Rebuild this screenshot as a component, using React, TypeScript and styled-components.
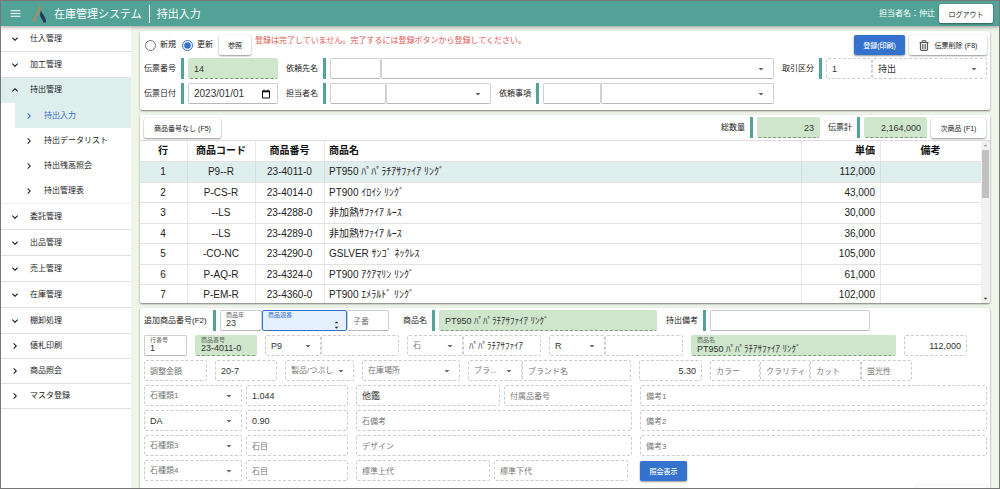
import React from 'react';
import styled, { createGlobalStyle, css } from 'styled-components';
import { MdMenu, MdKeyboardArrowDown, MdKeyboardArrowUp, MdKeyboardArrowRight, MdArrowDropDown, MdArrowDropUp } from 'react-icons/md';

const teal = '#52a297';
const blue = '#3472cd';
const green = '#cfe6cc';

const Global = createGlobalStyle`
  * { box-sizing: border-box; }
  body { margin: 0; font: 8px/12px "Liberation Sans", "Noto Sans CJK JP", sans-serif; color: #222; }
  button, input, select { font-family: inherit; margin: 0; }
`;

const Page = styled.div`
  height: 100vh;
  display: flex;
  flex-direction: column;
  border: 1px solid #777;
  background: #eff6e9;
  overflow: hidden;
`;

const Header = styled.header`
  display: flex;
  align-items: center;
  flex: 0 0 25px;
  padding: 0 6px 0 8px;
  background: ${teal};
  color: #fff;
  box-shadow: 0 1px 4px rgba(0, 0, 0, 0.4);
  z-index: 1;
`;

const MenuButton = styled.button`
  display: flex;
  padding: 0;
  border: 0;
  background: none;
  color: #fff;
  font-size: 13px;
`;

const Logo = styled.svg`
  width: 16px;
  height: 20px;
  margin-left: 10px;
`;

const Title = styled.h1`
  margin: 0;
  padding: 0 7px 0 6px;
  border-right: 1px solid #fff;
  font-size: 11px;
  line-height: 18px;
  font-weight: 400;
`;

const PageName = styled.span`
  flex: 1;
  padding-left: 7px;
  font-size: 11px;
`;

const Button = styled.button<{ $primary?: boolean; $width: number; $height?: number }>`
  display: flex;
  align-items: center;
  justify-content: center;
  gap: 6px;
  flex: none;
  width: ${p => p.$width}px;
  height: ${p => p.$height ?? 20}px;
  padding: 0;
  border: 0;
  border-radius: 2px;
  background: ${p => (p.$primary ? blue : '#fff')};
  color: ${p => (p.$primary ? '#fff' : '#222')};
  box-shadow: 0 1px 2px rgba(0, 0, 0, 0.4), 0 0 1px rgba(0, 0, 0, 0.2);
  font-size: 7px;
  font-weight: ${p => (p.$primary ? 500 : 400)};
  white-space: nowrap;
`;

const UserName = styled.span`
  margin-right: 4px;
`;

const Body = styled.div`
  display: flex;
  flex: 1;
  min-height: 0;
`;

const Sidebar = styled.nav`
  flex: 0 0 130px;
  background: #fff;
  ul { margin: 0; padding: 0; list-style: none; }
`;

const NavLink = styled.a<{ $open?: boolean; $leaf?: boolean }>`
  display: flex;
  align-items: center;
  gap: 9px;
  height: ${p => (p.$leaf || p.$open ? 25 : 26)}px;
  padding-left: 8px;
  border-bottom: 1px solid ${p => (p.$open ? '#deeeec' : '#e0e0e0')};
  background: ${p => (p.$open ? '#deeeec' : '#fff')};
  color: #222;
  text-decoration: none;
  svg { font-size: 12px; color: #111; }
`;

const SubList = styled.ul`
  && { padding-left: 14px; border-bottom: 1px solid #eee; }
`;

const SubLink = styled.a<{ $active?: boolean }>`
  display: flex;
  align-items: center;
  gap: 9px;
  height: 25px;
  padding-left: 8px;
  background: ${p => (p.$active ? '#deeeec' : '#fff')};
  color: ${p => (p.$active ? blue : '#222')};
  text-decoration: none;
  svg { font-size: 12px; }
`;

const Main = styled.main`
  flex: 1;
  min-width: 0;
  display: flex;
  flex-direction: column;
  gap: 5px;
  padding: 5px 9px 0;
`;

const Card = styled.section`
  flex: none;
  background: #fff;
  border-radius: 2px;
  box-shadow: 0 1px 2px rgba(0, 0, 0, 0.5);
`;

const SlipCard = styled(Card)`
  display: flex;
  flex-direction: column;
  gap: 3px;
  padding: 4px 3px 6px 4px;
`;

const Row = styled.div`
  display: flex;
  align-items: center;
  gap: 8px;
`;

const TopRow = styled(Row)`
  height: 20px;
  gap: 4px;
`;

const Radio = styled.label`
  display: flex;
  align-items: center;
  gap: 4px;
  padding-right: 2px;
  input { width: 11px; height: 11px; accent-color: ${blue}; }
  &:first-child { padding-left: 1px; }
`;

const Message = styled.p`
  flex: 1;
  align-self: flex-start;
  margin: 0;
  color: #e4574f;
`;

const Group = styled.div<{ $grow?: boolean }>`
  display: flex;
  align-items: center;
  min-width: 0;
  ${p => p.$grow && 'flex: 1;'}
`;

const Caption = styled.label<{ $width?: number }>`
  flex: none;
  width: ${p => p.$width ?? 40}px;
  height: 21px;
  margin-right: 4px;
  border-right: 3px solid ${teal};
  line-height: 21px;
  white-space: nowrap;
`;

const SlipGrid = styled.div`
  display: grid;
  grid-template-columns: 1fr 205px;
  gap: 4px 8px;
`;

type Look = 'solid' | 'dashed' | 'green' | 'focus';

const looks = {
  solid: css`border: 1px solid #d0d0d0; border-bottom-color: #b8b8b8;`,
  dashed: css`border: 1px dashed #ccc;`,
  green: css`border: 1px dashed transparent; border-bottom-color: #7f9a7d; background: ${green};`,
  focus: css`border: 1px solid ${blue}; background: #e5f0fd;`,
};

const Box = styled.span<{ $look: Look; $width?: number }>`
  position: relative;
  display: flex;
  align-items: center;
  flex: ${p => (p.$width ? `0 0 ${p.$width}px` : '1 1 0')};
  min-width: 0;
  height: 21px;
  border-radius: 2px;
  ${p => looks[p.$look]}
  > svg { position: absolute; right: 6px; font-size: 12px; color: #666; pointer-events: none; }
`;

const controlText = css<{ $right?: boolean; $size?: number; $floating?: boolean; $muted?: boolean }>`
  width: 100%;
  min-width: 0;
  height: 100%;
  padding: ${p => (p.$floating ? '5px 5px 0' : '0 5px')};
  border: 0;
  outline: 0;
  background: none;
  color: ${p => (p.$muted ? '#777' : '#333')};
  font-size: ${p => p.$size ?? 9}px;
  text-align: ${p => (p.$right ? 'right' : 'left')};
`;

const Input = styled.input`
  ${controlText}
  &::placeholder { color: #777; font-size: 8px; opacity: 1; }
`;

const Select = styled.select`
  ${controlText}
  appearance: none;
`;

const FloatLabel = styled.label<{ $focus?: boolean }>`
  position: absolute;
  top: 1px;
  left: 5px;
  color: ${p => (p.$focus ? blue : '#666')};
  font-size: 6px;
  line-height: 7px;
`;

const Spinner = styled.span`
  position: absolute;
  right: 5px;
  bottom: 0;
  display: flex;
  flex-direction: column;
  color: #222;
  font-size: 9px;
  svg { margin: -2px 0; }
`;

interface FieldProps {
  id?: string;
  name: string;
  value?: string;
  look?: Look;
  width?: number;
  select?: boolean;
  floating?: boolean;
  right?: boolean;
  hint?: boolean;
  size?: number;
  children?: React.ReactNode;
}

function Field({ id, name, value, look = 'dashed', width, select, floating, right, hint, size, children }: FieldProps) {
  const autoId = React.useId();
  const key = id ?? autoId;
  return (
    <Box $look={look} $width={width}>
      {floating && <FloatLabel htmlFor={key} $focus={look === 'focus'}>{name}</FloatLabel>}
      {select ? (
        <Select id={key} aria-label={name} $size={hint ? 8 : size} $muted={hint}>
          <option>{hint ? name : value}</option>
        </Select>
      ) : (
        <Input id={key} aria-label={name} defaultValue={value} placeholder={hint ? name : undefined} $right={right} $floating={floating} $size={size} />
      )}
      {select && <MdArrowDropDown />}
      {children}
    </Box>
  );
}

const CalendarIcon = () => (
  <svg width="10" height="10" viewBox="0 0 10 10" fill="none" stroke="#111">
    <path d="M1.5 2h7v7h-7z" />
    <path d="M1 2.5h8" strokeWidth="1.6" />
    <path d="M3 0.5v1M7 0.5v1" />
  </svg>
);

const TrashIcon = () => (
  <svg width="10" height="11" viewBox="0 0 10 11" fill="none" stroke="#555">
    <path d="M0.500 2.500h9" strokeWidth="1.2" />
    <path d="M3.200 2V0.700h3.600V2" />
    <path d="M1.500 3v6.200q0 1.200 1.200 1.200h4.600q1.200 0 1.200-1.200V3" strokeWidth="1.2" />
    <path d="M3.500 4v5M5 4v5M6.500 4v5" strokeWidth="0.8" />
  </svg>
);

const ListCard = styled(Card)`
  overflow: hidden;
`;

const ListTools = styled(Row)`
  justify-content: flex-end;
  height: 25px;
  padding: 0 4px;
  > button:first-child { margin-right: auto; }
`;

const TotalGroup = styled(Group)`
  + button { margin-left: -4px; }
`;

const TableArea = styled.div`
  display: flex;
  height: 163px;
  border-top: 1px solid #ddd;
`;

const TableClip = styled.div`
  flex: 1;
  overflow: hidden;
`;

const Table = styled.table`
  width: 100%;
  border-collapse: separate;
  border-spacing: 0;
  table-layout: fixed;
  font-size: 10px;
  line-height: 14px;
  tr { height: 21px; }
  tbody tr:nth-child(even) { height: 20px; }
`;

const Cell = styled.td<{ $align?: string; $selected?: boolean }>`
  padding: 0 5px 0 4px;
  border-bottom: 1px solid #e2e2e2;
  border-right: 1px solid ${p => (p.$selected ? '#cfdfdd' : '#e8e8e8')};
  background: ${p => (p.$selected ? '#deeeec' : '#fff')};
  text-align: ${p => p.$align ?? 'center'};
  color: #222;
  white-space: nowrap;
  &:last-child { border-right: 0; }
`;

const HeadCell = styled(Cell)`
  color: #111;
  font-weight: 700;
`;

const ScrollTrack = styled.div`
  display: flex;
  flex-direction: column;
  align-items: center;
  flex: 0 0 9px;
  background: #f1f1f1;
  color: #999;
  font-size: 9px;
  svg:last-child { margin-top: auto; color: #444; }
`;

const ScrollThumb = styled.div`
  width: 7px;
  height: 48px;
  background: #c1c1c1;
`;

const DetailCard = styled(Card)`
  display: flex;
  flex-direction: column;
  gap: 4px;
  padding: 2px 3px 4px 4px;
`;

const KeyRow = styled(Row)`
  > div + div { margin-left: 1px; }
  > div:nth-child(2) { margin-left: 6px; }
`;

const LineRow = styled(Row)`
  > span:nth-child(n + 2) { flex-shrink: 0; }
`;

const Pair = styled.div<{ $width?: number }>`
  display: flex;
  gap: 4px;
  flex: none;
  width: ${p => (p.$width ? `${p.$width}px` : 'auto')};
`;

const Half = styled(Pair)`
  padding-right: 4px;
`;

const Footer = styled.div`
  display: flex;
  justify-content: flex-end;
`;

const groups = ['委託管理', '出品管理', '売上管理', '在庫管理', '棚卸処理'];
const leaves = ['値札印刷', '商品照会', 'マスタ登録'];
const subs = ['持出入力', '持出データリスト', '持出残高照会', '持出管理表'];

const rows = [
  ['P9--R', '23-4011-0', 'PT950 ﾊﾟﾊﾟﾗﾁｱｻﾌｧｲｱ ﾘﾝｸﾞ', '112,000'],
  ['P-CS-R', '23-4014-0', 'PT900 ｲﾛｲｼ ﾘﾝｸﾞ', '43,000'],
  ['--LS', '23-4288-0', '非加熱ｻﾌｧｲｱ ﾙｰｽ', '30,000'],
  ['--LS', '23-4289-0', '非加熱ｻﾌｧｲｱ ﾙｰｽ', '36,000'],
  ['-CO-NC', '23-4290-0', 'GSLVER ｻﾝｺﾞ ﾈｯｸﾚｽ', '105,000'],
  ['P-AQ-R', '23-4324-0', 'PT900 ｱｸｱﾏﾘﾝ ﾘﾝｸﾞ', '61,000'],
  ['P-EM-R', '23-4360-0', 'PT900 ｴﾒﾗﾙﾄﾞ ﾘﾝｸﾞ', '102,000'],
];

export default function App() {
  return (
    <>
      <Global />
      <Page lang="ja">
        <Header>
          <MenuButton aria-label="メニュー"><MdMenu /></MenuButton>
          <Logo viewBox="0 0 16 20">
            <path d="M7.500 1 L9 3.500 C8.500 8 5 11 4 14 C3.300 16 2.800 17.500 2 18.500 L0.800 17 C2.500 12 6.500 7 7.500 1Z" fill="#b98a58" />
            <path d="M9 6 C9 9.500 14 12 14.200 18 L11.500 19 C11.500 16.500 9 15 8.200 12 C7.800 10 8.500 8 9 6Z" fill="#23385a" />
          </Logo>
          <Title>在庫管理システム</Title>
          <PageName>持出入力</PageName>
          <UserName>担当者名：仲辻</UserName>
          <Button $width={54} $height={19}>ログアウト</Button>
        </Header>
        <Body>
          <Sidebar>
            <ul>
              <li><NavLink href="#"><MdKeyboardArrowDown />仕入管理</NavLink></li>
              <li><NavLink href="#"><MdKeyboardArrowDown />加工管理</NavLink></li>
              <li>
                <NavLink href="#" $open><MdKeyboardArrowUp />持出管理</NavLink>
                <SubList>
                  {subs.map((s, i) => (
                    <li key={s}><SubLink href="#" $active={i === 0}><MdKeyboardArrowRight />{s}</SubLink></li>
                  ))}
                </SubList>
              </li>
              {groups.map(g => <li key={g}><NavLink href="#"><MdKeyboardArrowDown />{g}</NavLink></li>)}
              {leaves.map(g => <li key={g}><NavLink href="#" $leaf><MdKeyboardArrowRight />{g}</NavLink></li>)}
            </ul>
          </Sidebar>
          <Main>
            <SlipCard>
              <TopRow>
                <Radio><input type="radio" name="mode" />新規</Radio>
                <Radio><input type="radio" name="mode" defaultChecked />更新</Radio>
                <Button $width={32}>参照</Button>
                <Message>登録は完了していません。完了するには登録ボタンから登録してください。</Message>
                <Button $primary $width={51}>登録(印刷)</Button>
                <Button $width={78}><TrashIcon />伝票削除 (F8)</Button>
              </TopRow>
              <SlipGrid>
                <Row>
                  <Group>
                    <Caption htmlFor="slip">伝票番号</Caption>
                    <Field id="slip" name="伝票番号" value="14" look="green" width={90} />
                  </Group>
                  <Group $grow>
                    <Caption htmlFor="client">依頼先名</Caption>
                    <Field id="client" name="依頼先名" look="solid" width={51} />
                    <Field name="依頼先" look="solid" select />
                  </Group>
                </Row>
                <Group>
                  <Caption htmlFor="kind">取引区分</Caption>
                  <Field id="kind" name="取引区分" value="1" width={46} />
                  <Field name="区分名" value="持出" select />
                </Group>
                <Row>
                  <Group>
                    <Caption htmlFor="date">伝票日付</Caption>
                    <Field id="date" name="伝票日付" value="2023/01/01" look="solid" width={90} size={10}><CalendarIcon /></Field>
                  </Group>
                  <Group>
                    <Caption htmlFor="staff">担当者名</Caption>
                    <Field id="staff" name="担当者名" look="solid" width={56} />
                    <Field name="担当者" look="solid" width={105} select />
                  </Group>
                  <Group $grow>
                    <Caption htmlFor="matter">依頼事項</Caption>
                    <Field id="matter" name="依頼事項" look="solid" width={58} />
                    <Field name="依頼内容" look="solid" select />
                  </Group>
                </Row>
              </SlipGrid>
            </SlipCard>

            <ListCard>
              <ListTools>
                <Button $width={77}>商品番号なし (F5)</Button>
                <Group>
                  <Caption $width={32} htmlFor="qty">総数量</Caption>
                  <Field id="qty" name="総数量" value="23" look="green" width={63} right />
                </Group>
                <TotalGroup>
                  <Caption $width={32} htmlFor="total">伝票計</Caption>
                  <Field id="total" name="伝票計" value="2,164,000" look="green" width={63} right />
                </TotalGroup>
                <Button $width={55}>次商品 (F1)</Button>
              </ListTools>
              <TableArea>
                <TableClip>
                  <Table>
                    <colgroup>
                      <col width="48" /><col width="68" /><col width="69" /><col /><col width="79" /><col width="100" />
                    </colgroup>
                    <thead>
                      <tr>
                        <HeadCell as="th">行</HeadCell>
                        <HeadCell as="th">商品コード</HeadCell>
                        <HeadCell as="th">商品番号</HeadCell>
                        <HeadCell as="th" $align="left">商品名</HeadCell>
                        <HeadCell as="th" $align="right">単価</HeadCell>
                        <HeadCell as="th">備考</HeadCell>
                      </tr>
                    </thead>
                    <tbody>
                      {rows.map((r, i) => (
                        <tr key={r[1]}>
                          <Cell $selected={i === 0}>{i + 1}</Cell>
                          <Cell $selected={i === 0}>{r[0]}</Cell>
                          <Cell $selected={i === 0}>{r[1]}</Cell>
                          <Cell $selected={i === 0} $align="left">{r[2]}</Cell>
                          <Cell $selected={i === 0} $align="right">{r[3]}</Cell>
                          <Cell $selected={i === 0} />
                        </tr>
                      ))}
                    </tbody>
                  </Table>
                </TableClip>
                <ScrollTrack>
                  <MdArrowDropUp />
                  <ScrollThumb />
                  <MdArrowDropDown />
                </ScrollTrack>
              </TableArea>
            </ListCard>

            <DetailCard>
              <KeyRow>
                <Group>
                  <Caption $width={72} htmlFor="year">追加商品番号(F2)</Caption>
                  <Field id="year" name="商品年" value="23" look="solid" width={42} floating />
                  <Field name="商品親番" look="focus" width={85} floating>
                    <Spinner><MdArrowDropUp /><MdArrowDropDown /></Spinner>
                  </Field>
                  <Field name="子番" look="solid" width={42} hint />
                </Group>
                <Group>
                  <Caption $width={32} htmlFor="item">商品名</Caption>
                  <Field id="item" name="商品名" value="PT950 ﾊﾟﾊﾟﾗﾁｱｻﾌｧｲｱ ﾘﾝｸﾞ" look="green" width={218} />
                </Group>
                <Group>
                  <Caption htmlFor="note">持出備考</Caption>
                  <Field id="note" name="持出備考" look="solid" width={160} />
                </Group>
              </KeyRow>
              <LineRow>
                <Field name="行番号" value="1" look="solid" width={43} floating />
                <Field name="商品番号" value="23-4011-0" look="green" width={62} floating />
                <Group>
                  <Field name="地金" value="P9" width={56} select />
                  <Field name="地金名" width={78} />
                </Group>
                <Group>
                  <Field name="石" width={56} select hint />
                  <Field name="石名" value="ﾊﾟﾊﾟﾗﾁｱｻﾌｧｲｱ" width={78} />
                </Group>
                <Group>
                  <Field name="品目" value="R" width={56} select />
                  <Field name="品目名" width={78} />
                </Group>
                <Field name="商品名" value="PT950 ﾊﾟﾊﾟﾗﾁｱｻﾌｧｲｱ ﾘﾝｸﾞ" look="green" width={205} floating />
                <Field name="単価" value="112,000" width={63} right />
              </LineRow>
              <LineRow>
                <Field name="調整金額" width={63} hint />
                <Field name="枝番" value="20-7" width={62} />
                <Field name="製品/つぶし" width={69} select hint />
                <Field name="在庫場所" width={98} select hint />
                <Group>
                  <Field name="ブラ..." width={54} select hint />
                  <Field name="ブランド名" width={109} hint />
                </Group>
                <Field name="重量" value="5.30" width={63} right />
                <Group>
                  <Field name="カラー" width={50} hint />
                  <Field name="クラリティ" width={50} hint />
                  <Field name="カット" width={51} hint />
                  <Field name="蛍光性" width={51} hint />
                </Group>
              </LineRow>
              <Row>
                <Pair $width={204}>
                  <Field name="石種類1" width={98} select hint />
                  <Field name="石目1" value="1.044" />
                </Pair>
                <Pair $width={276}>
                  <Field name="鑑別" value="他鑑" width={144} />
                  <Field name="付属品番号" hint />
                </Pair>
                <Field name="備考1" hint />
              </Row>
              <Row>
                <Pair $width={204}>
                  <Field name="石種類2" value="DA" width={98} select />
                  <Field name="石目2" value="0.90" />
                </Pair>
                <Field name="石備考" width={276} hint />
                <Field name="備考2" hint />
              </Row>
              <Row>
                <Pair $width={204}>
                  <Field name="石種類3" width={98} select hint />
                  <Field name="石目" hint />
                </Pair>
                <Field name="デザイン" width={276} hint />
                <Field name="備考3" hint />
              </Row>
              <Row>
                <Pair $width={204}>
                  <Field name="石種類4" width={98} select hint />
                  <Field name="石目" hint />
                </Pair>
                <Half $width={276}>
                  <Field name="標準上代" hint />
                  <Field name="標準下代" hint />
                </Half>
                <Button $primary $width={47}>照会表示</Button>
              </Row>
              <Footer>
                <Button $width={70} aria-label="追加" />
              </Footer>
            </DetailCard>
          </Main>
        </Body>
      </Page>
    </>
  );
}
